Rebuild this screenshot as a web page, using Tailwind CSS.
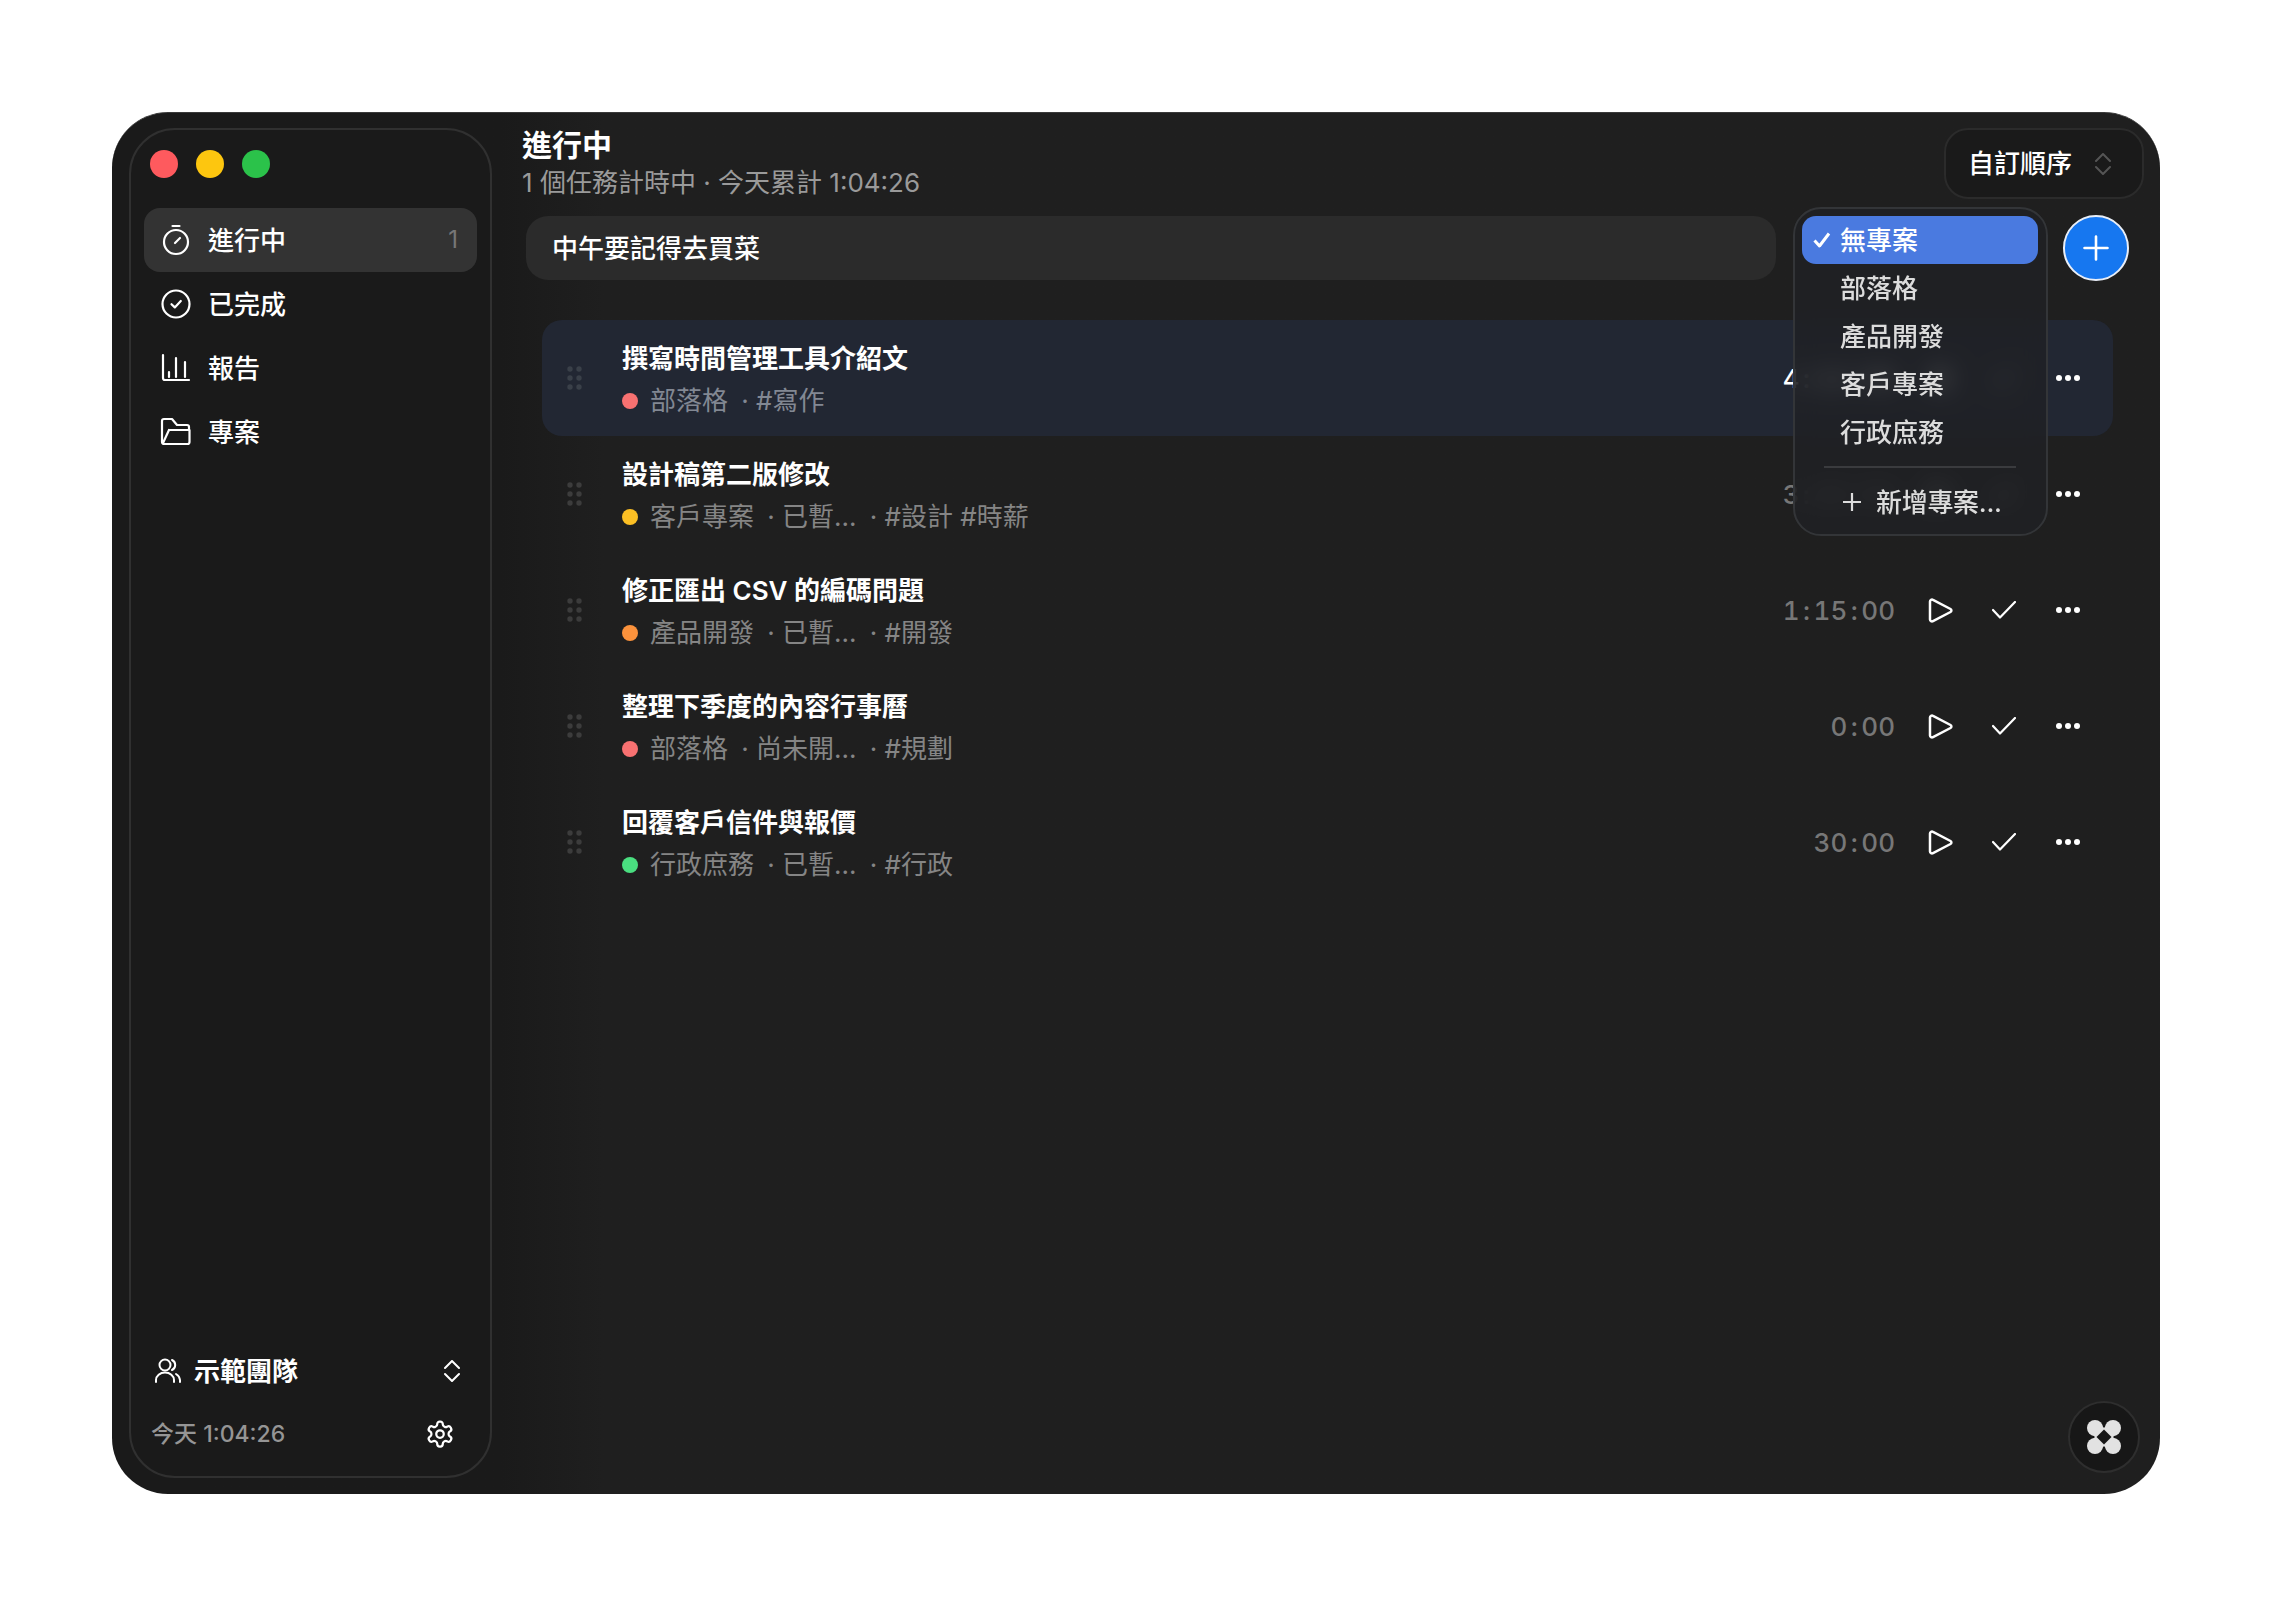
<!DOCTYPE html>
<html lang="zh-Hant">
<head>
<meta charset="utf-8">
<title>進行中</title>
<script src="https://cdn.jsdelivr.net/npm/@tailwindcss/browser@4"></script>
</head>
<body class="bg-white font-[Inter,'Noto_Sans_CJK_TC',sans-serif] text-white">
<div class="w-[2272px] h-[1606px] pt-[112px] pl-[112px]">
  <div class="flex w-[2048px] h-[1382px] pl-[17px] pr-[16px] py-[16px] rounded-[56px] overflow-hidden bg-linear-to-r from-[#1a1a1a] from-[19%] to-[#1f1f1f] to-[24%] border-t border-[#3a3a3a]">
    <!-- sidebar -->
    <aside class="flex flex-col w-[363px] shrink-0 -mt-[1px] rounded-[46px] border-2 border-[#303030] px-[13px] bg-[#1a1a1a]">
      <div class="flex gap-[18px] pl-[6px] pt-[20px]">
        <span class="w-[28px] h-[28px] rounded-full bg-[#fe5a5e]"></span>
        <span class="w-[28px] h-[28px] rounded-full bg-[#fdc60f]"></span>
        <span class="w-[28px] h-[28px] rounded-full bg-[#2bc24a]"></span>
      </div>
      <nav class="mt-[30px] text-[26px] font-medium">
        <div class="flex items-center h-[64px] rounded-[16px] bg-[#333333] pr-[19px]">
          <svg class="ml-[16px] w-[32px] h-[32px]" viewBox="0 0 32 32" fill="none" stroke="#fff" stroke-width="2.2" stroke-linecap="round"><path d="M12.5 2h7"/><circle cx="16" cy="18" r="12"/><path d="M15 19l5-5"/></svg>
          <span class="ml-[16px] flex-1">進行中</span>
          <span class="text-[24px] font-normal text-[#777]">1</span>
        </div>
        <div class="flex items-center h-[64px]">
          <svg class="ml-[16px] w-[32px] h-[32px]" viewBox="0 0 32 32" fill="none" stroke="#fff" stroke-width="2.2" stroke-linecap="round" stroke-linejoin="round"><circle cx="16" cy="16" r="13.5"/><path d="M11.5 16.2l3.3 3.2 6-6.4"/></svg>
          <span class="ml-[16px]">已完成</span>
        </div>
        <div class="flex items-center h-[64px]">
          <svg class="ml-[16px] w-[32px] h-[32px]" viewBox="0 0 32 32" fill="none" stroke="#fff" stroke-width="2.2" stroke-linecap="round" stroke-linejoin="round"><path d="M3 3v23a2 2 0 0 0 2 2h24"/><path d="M9 20v5M16 6v19M25 10v15"/></svg>
          <span class="ml-[16px]">報告</span>
        </div>
        <div class="flex items-center h-[64px]">
          <svg class="ml-[16px] w-[32px] h-[32px]" viewBox="0 0 32 32" fill="none" stroke="#fff" stroke-width="2.2" stroke-linecap="round" stroke-linejoin="round"><path d="M9 14H29.500V26a2 2 0 0 1-2 2H4a2 2 0 0 1-2-2V5a2 2 0 0 1 2-2h8l5 6h10a2 2 0 0 1 2 2v3"/><path d="M3 27L9 14"/></svg>
          <span class="ml-[16px]">專案</span>
        </div>
      </nav>
      <div class="mt-auto">
        <div class="flex items-center h-[62px] mb-[1px] pl-[10px] pr-[17px]">
          <svg class="w-[28px] h-[28px]" viewBox="0 0 28 28" fill="none" stroke="#fff" stroke-width="2" stroke-linecap="round" stroke-linejoin="round"><circle cx="11" cy="8" r="5.500"/><path d="M2 25v-2a9 7.500 0 0 1 18 0v2"/><path d="M18 3a5.500 5.500 0 0 1 0 10"/><path d="M26 25v-2a8 8 0 0 0-4-6"/></svg>
          <span class="ml-[12px] flex-1 text-[26px] font-semibold">示範團隊</span>
          <svg class="w-[16px] h-[22px]" viewBox="0 0 16 22" fill="none" stroke="#fff" stroke-width="2" stroke-linecap="round" stroke-linejoin="round"><path d="M1 8l7-7 7 7M1 14l7 7 7-7"/></svg>
        </div>
        <div class="flex items-center h-[62px] pl-[7px] pr-[22px] mb-[11px]">
          <span class="flex-1 text-[23px] font-medium text-[#959595]">今天 1:04:26</span>
          <svg class="w-[30px] h-[30px]" viewBox="0 0 24 24" fill="none" stroke="#fff" stroke-width="1.800" stroke-linecap="round" stroke-linejoin="round"><path d="M12.220 2h-.44a2 2 0 0 0-2 2v.18a2 2 0 0 1-1 1.730l-.43.25a2 2 0 0 1-2 0l-.15-.08a2 2 0 0 0-2.730.730l-.22.38a2 2 0 0 0 .730 2.730l.15.1a2 2 0 0 1 1 1.720v.51a2 2 0 0 1-1 1.740l-.15.09a2 2 0 0 0-.730 2.730l.22.38a2 2 0 0 0 2.730.730l.15-.08a2 2 0 0 1 2 0l.43.25a2 2 0 0 1 1 1.730V20a2 2 0 0 0 2 2h.44a2 2 0 0 0 2-2v-.18a2 2 0 0 1 1-1.730l.43-.25a2 2 0 0 1 2 0l.15.08a2 2 0 0 0 2.730-.730l.22-.39a2 2 0 0 0-.730-2.730l-.15-.08a2 2 0 0 1-1-1.740v-.5a2 2 0 0 1 1-1.740l.15-.09a2 2 0 0 0 .730-2.730l-.22-.38a2 2 0 0 0-2.730-.730l-.15.08a2 2 0 0 1-2 0l-.43-.25a2 2 0 0 1-1-1.730V4a2 2 0 0 0-2-2z"/><circle cx="12" cy="12" r="3"/></svg>
        </div>
      </div>
    </aside>

    <!-- main -->
    <main class="relative flex-1 min-w-0">
      <header class="flex items-start justify-between h-[87px] pl-[30px]">
        <div class="-mt-[2px]">
          <h1 class="text-[30px] leading-[36px] font-semibold">進行中</h1>
          <p class="mt-[2px] text-[26px] leading-[36px] text-[#9a9a9a]">1 個任務計時中 · 今天累計 1:04:26</p>
        </div>
        <div class="flex items-center w-[200px] h-[71px] -mt-[1px] rounded-[24px] border-2 border-[#2b2b2b] bg-[#1a1a1a] pl-[22px]">
          <span class="text-[26px] font-medium">自訂順序</span>
          <svg class="ml-[22px] w-[18px] h-[22px]" viewBox="0 0 18 22" fill="none" stroke="#555" stroke-width="2" stroke-linecap="round" stroke-linejoin="round"><path d="M2 8l7-7 7 7M2 14l7 7 7-7"/></svg>
        </div>
      </header>

      <div class="flex items-center h-[64px] pl-[34px] pr-[15px]">
        <div class="flex items-center w-[1250px] h-[64px] rounded-[22px] bg-[#2b2b2b] pl-[26px] text-[26px] font-medium">中午要記得去買菜</div>
        <button class="ml-auto flex items-center justify-center w-[66px] h-[66px] rounded-full bg-[#1677f0] border-2 border-[#e8eef8]">
          <svg class="w-[26px] h-[26px]" viewBox="0 0 26 26" fill="none" stroke="#fff" stroke-width="2.600" stroke-linecap="round"><path d="M13 1.500v23M1.500 13h23"/></svg>
        </button>
      </div>

      <div class="mt-[40px] ml-[50px] mr-[31px]">
        <!-- row 1 -->
        <div class="flex items-center h-[116px] rounded-[20px] bg-[#222733] pr-[13px]">
          <svg class="ml-[25px] w-[16px] h-[24px]" viewBox="0 0 16 24" fill="#3a4049"><circle cx="3" cy="3" r="2.700"/><circle cx="12" cy="3" r="2.700"/><circle cx="3" cy="12" r="2.700"/><circle cx="12" cy="12" r="2.700"/><circle cx="3" cy="21" r="2.700"/><circle cx="12" cy="21" r="2.700"/></svg>
          <div class="ml-[39px] flex-1">
            <div class="text-[26px] leading-[36px] font-semibold mt-[3px]">撰寫時間管理工具介紹文</div>
            <div class="mt-[6px] flex items-center text-[26px] leading-[36px] text-[#828893]">
              <span class="w-[16px] h-[16px] rounded-full bg-[#f87171] mr-[12px]"></span><span>部落格</span><span class="w-[28px] pl-[6px] text-center">·</span><span>#寫作</span>
            </div>
          </div>
          <span class="mr-[13px] text-[26px] font-medium tabular-nums text-white">4<span class="inline-block w-[14px] text-center">:</span>12<span class="inline-block w-[14px] text-center">:</span>08</span>
          <div class="flex items-center justify-center w-[64px] h-[64px]"><svg class="w-[26px] h-[27px]" viewBox="0 0 26 27" fill="#fff"><rect x="4" y="2" width="6" height="23" rx="2"/><rect x="16" y="2" width="6" height="23" rx="2"/></svg></div>
          <div class="flex items-center justify-center w-[64px] h-[64px]"><svg class="w-[24px] h-[18px]" viewBox="0 0 24 18" fill="none" stroke="#fff" stroke-width="2.200" stroke-linecap="round" stroke-linejoin="round"><path d="M1 9l7 7.500L23 1"/></svg></div>
          <div class="flex items-center justify-center w-[64px] h-[64px]"><svg class="w-[24px] h-[6px]" viewBox="0 0 24 6" fill="#fff"><circle cx="3" cy="3" r="3"/><circle cx="12" cy="3" r="3"/><circle cx="21" cy="3" r="3"/></svg></div>
        </div>
        <!-- row 2 -->
        <div class="flex items-center h-[116px] rounded-[20px] pr-[13px]">
          <svg class="ml-[25px] w-[16px] h-[24px]" viewBox="0 0 16 24" fill="#3c3c3c"><circle cx="3" cy="3" r="2.700"/><circle cx="12" cy="3" r="2.700"/><circle cx="3" cy="12" r="2.700"/><circle cx="12" cy="12" r="2.700"/><circle cx="3" cy="21" r="2.700"/><circle cx="12" cy="21" r="2.700"/></svg>
          <div class="ml-[39px] flex-1">
            <div class="text-[26px] leading-[36px] font-semibold mt-[3px]">設計稿第二版修改</div>
            <div class="mt-[6px] flex items-center text-[26px] leading-[36px] text-[#858585]">
              <span class="w-[16px] h-[16px] rounded-full bg-[#fbbf24] mr-[12px]"></span><span>客戶專案</span><span class="w-[28px] pl-[6px] text-center">·</span><span>已暫...</span><span class="w-[28px] pl-[6px] text-center">·</span><span>#設計 #時薪</span>
            </div>
          </div>
          <span class="mr-[13px] text-[26px] font-medium tabular-nums text-[#777]">3<span class="inline-block w-[14px] text-center">:</span>45<span class="inline-block w-[14px] text-center">:</span>00</span>
          <div class="flex items-center justify-center w-[64px] h-[64px]"><svg class="w-[26px] h-[27px]" viewBox="0 0 26 27" fill="none" stroke="#fff" stroke-width="2.500" stroke-linejoin="round"><path d="M3 4.500a2 2 0 0 1 3-1.700L23.500 12a1.700 1.700 0 0 1 0 3L6 24.200a2 2 0 0 1-3-1.700Z"/></svg></div>
          <div class="flex items-center justify-center w-[64px] h-[64px]"><svg class="w-[24px] h-[18px]" viewBox="0 0 24 18" fill="none" stroke="#fff" stroke-width="2.200" stroke-linecap="round" stroke-linejoin="round"><path d="M1 9l7 7.500L23 1"/></svg></div>
          <div class="flex items-center justify-center w-[64px] h-[64px]"><svg class="w-[24px] h-[6px]" viewBox="0 0 24 6" fill="#fff"><circle cx="3" cy="3" r="3"/><circle cx="12" cy="3" r="3"/><circle cx="21" cy="3" r="3"/></svg></div>
        </div>
        <!-- row 3 -->
        <div class="flex items-center h-[116px] rounded-[20px] pr-[13px]">
          <svg class="ml-[25px] w-[16px] h-[24px]" viewBox="0 0 16 24" fill="#3c3c3c"><circle cx="3" cy="3" r="2.700"/><circle cx="12" cy="3" r="2.700"/><circle cx="3" cy="12" r="2.700"/><circle cx="12" cy="12" r="2.700"/><circle cx="3" cy="21" r="2.700"/><circle cx="12" cy="21" r="2.700"/></svg>
          <div class="ml-[39px] flex-1">
            <div class="text-[26px] leading-[36px] font-semibold mt-[3px]">修正匯出 CSV 的編碼問題</div>
            <div class="mt-[6px] flex items-center text-[26px] leading-[36px] text-[#858585]">
              <span class="w-[16px] h-[16px] rounded-full bg-[#fb923c] mr-[12px]"></span><span>產品開發</span><span class="w-[28px] pl-[6px] text-center">·</span><span>已暫...</span><span class="w-[28px] pl-[6px] text-center">·</span><span>#開發</span>
            </div>
          </div>
          <span class="mr-[13px] text-[26px] font-medium tabular-nums text-[#777]">1<span class="inline-block w-[14px] text-center">:</span>15<span class="inline-block w-[14px] text-center">:</span>00</span>
          <div class="flex items-center justify-center w-[64px] h-[64px]"><svg class="w-[26px] h-[27px]" viewBox="0 0 26 27" fill="none" stroke="#fff" stroke-width="2.500" stroke-linejoin="round"><path d="M3 4.500a2 2 0 0 1 3-1.700L23.500 12a1.700 1.700 0 0 1 0 3L6 24.200a2 2 0 0 1-3-1.700Z"/></svg></div>
          <div class="flex items-center justify-center w-[64px] h-[64px]"><svg class="w-[24px] h-[18px]" viewBox="0 0 24 18" fill="none" stroke="#fff" stroke-width="2.200" stroke-linecap="round" stroke-linejoin="round"><path d="M1 9l7 7.500L23 1"/></svg></div>
          <div class="flex items-center justify-center w-[64px] h-[64px]"><svg class="w-[24px] h-[6px]" viewBox="0 0 24 6" fill="#fff"><circle cx="3" cy="3" r="3"/><circle cx="12" cy="3" r="3"/><circle cx="21" cy="3" r="3"/></svg></div>
        </div>
        <!-- row 4 -->
        <div class="flex items-center h-[116px] rounded-[20px] pr-[13px]">
          <svg class="ml-[25px] w-[16px] h-[24px]" viewBox="0 0 16 24" fill="#3c3c3c"><circle cx="3" cy="3" r="2.700"/><circle cx="12" cy="3" r="2.700"/><circle cx="3" cy="12" r="2.700"/><circle cx="12" cy="12" r="2.700"/><circle cx="3" cy="21" r="2.700"/><circle cx="12" cy="21" r="2.700"/></svg>
          <div class="ml-[39px] flex-1">
            <div class="text-[26px] leading-[36px] font-semibold mt-[3px]">整理下季度的內容行事曆</div>
            <div class="mt-[6px] flex items-center text-[26px] leading-[36px] text-[#858585]">
              <span class="w-[16px] h-[16px] rounded-full bg-[#f87171] mr-[12px]"></span><span>部落格</span><span class="w-[28px] pl-[6px] text-center">·</span><span>尚未開...</span><span class="w-[28px] pl-[6px] text-center">·</span><span>#規劃</span>
            </div>
          </div>
          <span class="mr-[13px] text-[26px] font-medium tabular-nums text-[#777]">0<span class="inline-block w-[14px] text-center">:</span>00</span>
          <div class="flex items-center justify-center w-[64px] h-[64px]"><svg class="w-[26px] h-[27px]" viewBox="0 0 26 27" fill="none" stroke="#fff" stroke-width="2.500" stroke-linejoin="round"><path d="M3 4.500a2 2 0 0 1 3-1.700L23.500 12a1.700 1.700 0 0 1 0 3L6 24.200a2 2 0 0 1-3-1.700Z"/></svg></div>
          <div class="flex items-center justify-center w-[64px] h-[64px]"><svg class="w-[24px] h-[18px]" viewBox="0 0 24 18" fill="none" stroke="#fff" stroke-width="2.200" stroke-linecap="round" stroke-linejoin="round"><path d="M1 9l7 7.500L23 1"/></svg></div>
          <div class="flex items-center justify-center w-[64px] h-[64px]"><svg class="w-[24px] h-[6px]" viewBox="0 0 24 6" fill="#fff"><circle cx="3" cy="3" r="3"/><circle cx="12" cy="3" r="3"/><circle cx="21" cy="3" r="3"/></svg></div>
        </div>
        <!-- row 5 -->
        <div class="flex items-center h-[116px] rounded-[20px] pr-[13px]">
          <svg class="ml-[25px] w-[16px] h-[24px]" viewBox="0 0 16 24" fill="#3c3c3c"><circle cx="3" cy="3" r="2.700"/><circle cx="12" cy="3" r="2.700"/><circle cx="3" cy="12" r="2.700"/><circle cx="12" cy="12" r="2.700"/><circle cx="3" cy="21" r="2.700"/><circle cx="12" cy="21" r="2.700"/></svg>
          <div class="ml-[39px] flex-1">
            <div class="text-[26px] leading-[36px] font-semibold mt-[3px]">回覆客戶信件與報價</div>
            <div class="mt-[6px] flex items-center text-[26px] leading-[36px] text-[#858585]">
              <span class="w-[16px] h-[16px] rounded-full bg-[#4ade80] mr-[12px]"></span><span>行政庶務</span><span class="w-[28px] pl-[6px] text-center">·</span><span>已暫...</span><span class="w-[28px] pl-[6px] text-center">·</span><span>#行政</span>
            </div>
          </div>
          <span class="mr-[13px] text-[26px] font-medium tabular-nums text-[#777]">30<span class="inline-block w-[14px] text-center">:</span>00</span>
          <div class="flex items-center justify-center w-[64px] h-[64px]"><svg class="w-[26px] h-[27px]" viewBox="0 0 26 27" fill="none" stroke="#fff" stroke-width="2.500" stroke-linejoin="round"><path d="M3 4.500a2 2 0 0 1 3-1.700L23.500 12a1.700 1.700 0 0 1 0 3L6 24.200a2 2 0 0 1-3-1.700Z"/></svg></div>
          <div class="flex items-center justify-center w-[64px] h-[64px]"><svg class="w-[24px] h-[18px]" viewBox="0 0 24 18" fill="none" stroke="#fff" stroke-width="2.200" stroke-linecap="round" stroke-linejoin="round"><path d="M1 9l7 7.500L23 1"/></svg></div>
          <div class="flex items-center justify-center w-[64px] h-[64px]"><svg class="w-[24px] h-[6px]" viewBox="0 0 24 6" fill="#fff"><circle cx="3" cy="3" r="3"/><circle cx="12" cy="3" r="3"/><circle cx="21" cy="3" r="3"/></svg></div>
        </div>
      </div>

      <!-- project dropdown -->
      <div class="absolute left-[1301px] top-[78px] w-[255px] h-[329px] rounded-[28px] border-2 border-[#333538] bg-[#1f2024]/80 backdrop-blur-md pl-[7px] pr-[8px] py-[7px] text-[26px] font-medium text-[#dcdcdc]">
        <div class="relative flex items-center h-[48px] rounded-[14px] bg-[#4a7ae0] pl-[38px] text-white">
          <svg class="absolute left-[11px] top-[16px] w-[18px] h-[16px]" viewBox="0 0 18 16" fill="none" stroke="#fff" stroke-width="3" stroke-linejoin="round"><path d="M1.500 8.500L6.500 14L16 1.500"/></svg>
          無專案
        </div>
        <div class="flex items-center h-[48px] pl-[38px]">部落格</div>
        <div class="flex items-center h-[48px] pl-[38px]">產品開發</div>
        <div class="flex items-center h-[48px] pl-[38px]">客戶專案</div>
        <div class="flex items-center h-[48px] pl-[38px]">行政庶務</div>
        <div class="mt-[10px] mx-[22px] h-[2px] bg-[#3a3b3e]"></div>
        <div class="mt-[10px] flex items-center h-[48px] pl-[41px]">
          <svg class="w-[18px] h-[18px]" viewBox="0 0 18 18" fill="none" stroke="#dcdcdc" stroke-width="2.200"><path d="M9 0v18M0 9h18"/></svg>
          <span class="ml-[15px] tracking-[-0.3px]">新增專案...</span>
        </div>
      </div>

      <!-- floating button -->
      <div class="absolute left-[1576px] top-[1272px] flex items-center justify-center w-[72px] h-[72px] rounded-full bg-[#171717] border-2 border-[#2e2e2e]">
        <svg class="w-[34px] h-[34px]" viewBox="0 0 34 34"><g fill="#e2e2e2"><circle cx="8" cy="8" r="8"/><circle cx="26" cy="8" r="8"/><circle cx="8" cy="26" r="8"/><circle cx="26" cy="26" r="8"/></g><path d="M8 8L26 26M26 8L8 26" stroke="#e2e2e2" stroke-width="13"/><path d="M17 9.500L24.500 17L17 24.500L9.500 17Z" fill="#171717"/></svg>
      </div>
    </main>
  </div>
</div>
</body>
</html>
